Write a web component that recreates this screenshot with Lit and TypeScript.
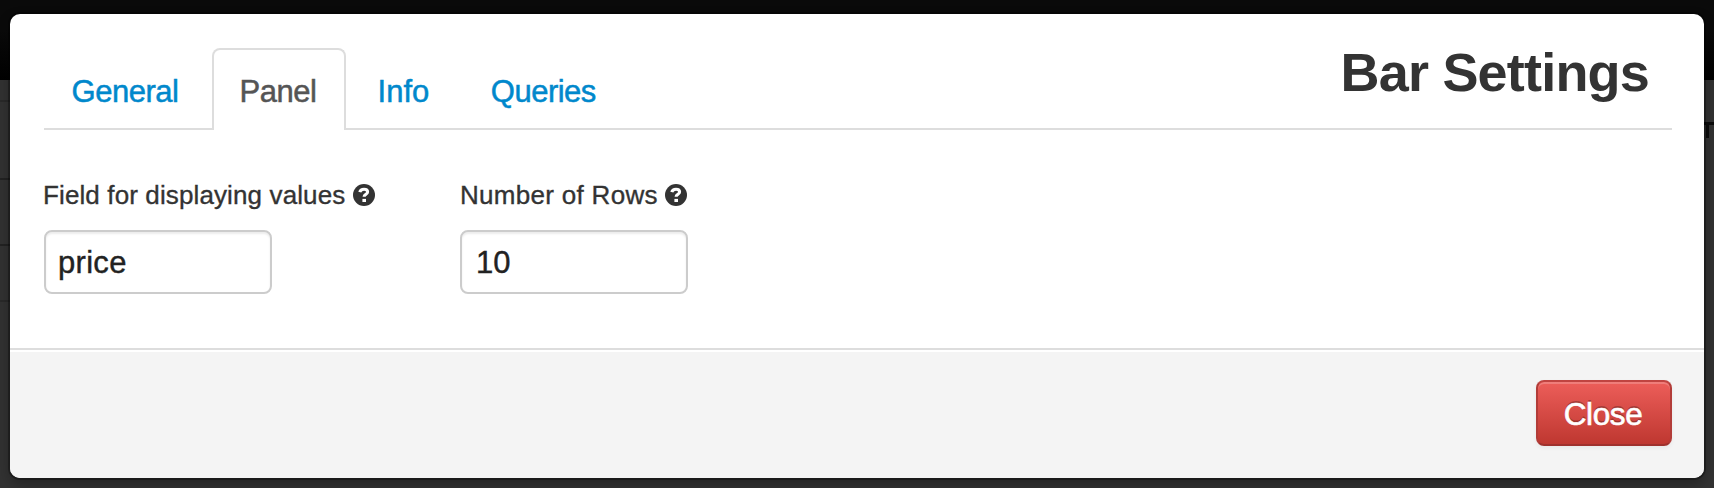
import { LitElement, html, css } from "lit";
import { customElement, property } from "lit/decorators.js";

@customElement("help-icon")
class HelpIcon extends LitElement {
  static styles = css`
    :host { display: block; width: 22px; height: 22px; }
    svg { display: block; }
  `;
  render() {
    return html`<svg width="22" height="22" viewBox="0 0 22 22">
      <circle cx="11" cy="11" r="11" fill="#333" />
      <path d="M6.8 8.2C7.3 6.2 8.9 5.2 11 5.2c2.2 0 3.6 1.1 3.6 2.7 0 2.3-3.5 2.3-3.5 4.9" fill="none" stroke="#fff" stroke-width="3.1" />
      <rect x="9.4" y="14.9" width="3.6" height="3.1" fill="#fff" />
    </svg>`;
  }
}

@customElement("setting-field")
class SettingField extends LitElement {
  @property() label = "";
  @property() value = "";
  static styles = css`
    :host { display: block; width: 416px; }
    .label { display: flex; align-items: center; height: 40px; font-size: 26px; letter-spacing: 0.12px; color: #333; white-space: nowrap; -webkit-text-stroke: 0.35px #333; }
    .text { margin-left: -1px; }
    .rows { letter-spacing: 0.3px; margin-left: 0; }
    help-icon { margin-left: 8px; }
    .rows + help-icon { margin-left: 7px; }
    input {
      display: block; box-sizing: border-box; width: 228px; height: 64px; margin: 15px 0 0; padding: 2px 12px 0;
      border: 2px solid #ccc; border-radius: 8px; background: #fff; box-shadow: inset 0 2px 2px rgba(0, 0, 0, 0.075);
      font: 31px "Liberation Sans", Arial, sans-serif; color: #222; outline: none; letter-spacing: 0.3px;
      -webkit-text-stroke: 0.4px #222;
    }
    .number { padding-left: 14px; letter-spacing: 0; }
  `;
  render() {
    const numeric = /^\d+$/.test(this.value);
    return html`<label class="label"><span class="text ${numeric ? "rows" : ""}">${this.label}</span><help-icon></help-icon></label>
      <input class=${numeric ? "number" : ""} .value=${this.value} />`;
  }
}

@customElement("app-root")
class AppRoot extends LitElement {
  static styles = css`
    :host {
      display: block; box-sizing: border-box; height: 488px; padding: 14px 10px 10px; overflow: hidden;
      background:
        linear-gradient(#0b0b0b, #0b0b0b) right 0 top 122px / 10px 3px no-repeat,
        linear-gradient(#0b0b0b, #0b0b0b) right 5px top 125px / 3px 13px no-repeat,
        linear-gradient(#292929, #292929) left 0 top 100px / 10px 2px no-repeat,
        linear-gradient(#222, #222) left 0 top 178px / 10px 2px no-repeat,
        linear-gradient(#222, #222) left 0 top 244px / 10px 2px no-repeat,
        linear-gradient(#292929, #292929) left 0 top 300px / 10px 2px no-repeat,
        linear-gradient(#0a0a0a 0, #0a0a0a 30px, #010101 80px, #323232 80px, #323232);
      font-family: "Liberation Sans", Arial, sans-serif;
    }
    .modal {
      display: flex; flex-direction: column; height: 464px; border-radius: 10px; overflow: hidden;
      background: #fff; box-shadow: 0 0 0 2px rgba(0, 0, 0, 0.3), 0 6px 14px rgba(0, 0, 0, 0.3);
    }
    .head { display: flex; justify-content: space-between; height: 116px; margin: 0 32px 0 34px; box-sizing: border-box; border-bottom: 2px solid #ddd; }
    .tabs { display: flex; margin-top: 34px; height: 82px; }
    .tab {
      box-sizing: border-box; height: 82px; border: 2px solid transparent; border-bottom: 0; padding: 22px 0 0 25.6px;
      font-size: 31px; line-height: 40px; letter-spacing: -0.5px; color: #08c; white-space: nowrap;
      -webkit-text-stroke: 0.5px currentColor;
    }
    .general { width: 168px; }
    .panel { width: 134px; border-color: #ddd; border-radius: 8px 8px 0 0; background: #fff; color: #555; }
    .info { width: 114px; padding-left: 29.6px; letter-spacing: 0; }
    .queries { padding-left: 28.8px; }
    h3 { margin: 26px 23px 0 0; font-size: 54px; line-height: 64px; letter-spacing: -0.8px; color: #333; white-space: nowrap; }
    .body { display: flex; flex: 1; padding: 45px 34px 0; }
    .foot {
      display: flex; box-sizing: border-box; height: 130px; padding: 30px 32px 0; justify-content: flex-end;
      border-top: 2px solid #ddd; background: #f4f4f4; box-shadow: inset 0 2px 0 #fff;
    }
    button {
      box-sizing: border-box; width: 136px; height: 66px; padding: 2px 2px 0 0; border: 2px solid; border-color: #c04441 #b23c38 #9f312d;
      border-radius: 8px; background: linear-gradient(#ee5f5b, #bd362f) border-box;
      box-shadow: inset 0 2px 0 rgba(255, 255, 255, 0.2), 0 2px 4px rgba(0, 0, 0, 0.05);
      font: 31.5px "Liberation Sans", Arial, sans-serif; letter-spacing: -0.4px; color: #fff; text-shadow: 0 -2px 0 rgba(0, 0, 0, 0.25);
      -webkit-text-stroke: 0.6px #fff;
    }
  `;
  render() {
    return html`<div class="modal">
      <div class="head">
        <div class="tabs">
          <div class="tab general">General</div>
          <div class="tab panel">Panel</div>
          <div class="tab info">Info</div>
          <div class="tab queries">Queries</div>
        </div>
        <h3>Bar Settings</h3>
      </div>
      <div class="body">
        <setting-field label="Field for displaying values" value="price"></setting-field>
        <setting-field label="Number of Rows" value="10"></setting-field>
      </div>
      <div class="foot"><button>Close</button></div>
    </div>`;
  }
}
